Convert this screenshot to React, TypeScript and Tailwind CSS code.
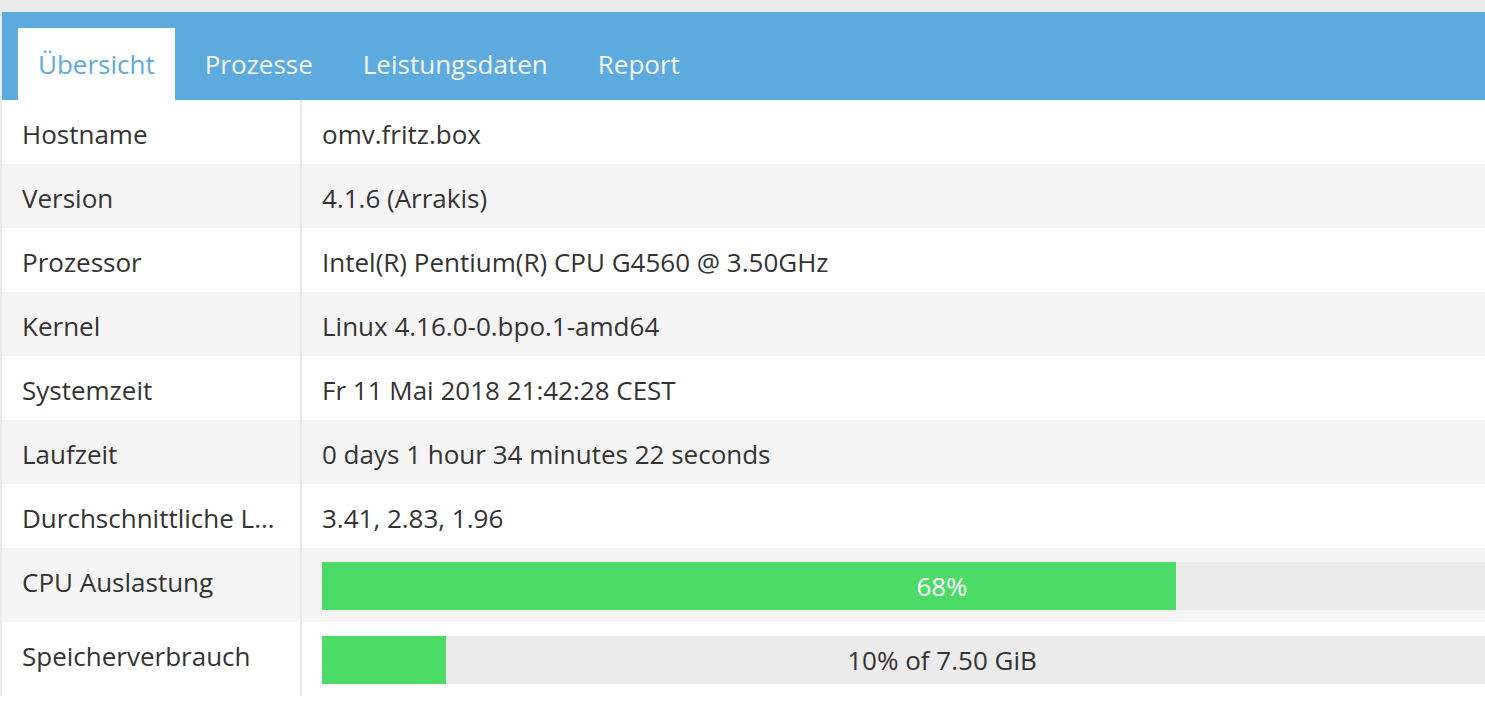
import React from "react"

const tabs = ["Übersicht", "Prozesse", "Leistungsdaten", "Report"]

const rows: { label: string; value: string }[] = [
  { label: "Hostname", value: "omv.fritz.box" },
  { label: "Version", value: "4.1.6 (Arrakis)" },
  { label: "Prozessor", value: "Intel(R) Pentium(R) CPU G4560 @ 3.50GHz" },
  { label: "Kernel", value: "Linux 4.16.0-0.bpo.1-amd64" },
  { label: "Systemzeit", value: "Fr 11 Mai 2018 21:42:28 CEST" },
  { label: "Laufzeit", value: "0 days 1 hour 34 minutes 22 seconds" },
  { label: "Durchschnittliche Last", value: "3.41, 2.83, 1.96" },
]

const bars = [
  { label: "CPU Auslastung", fill: 68.9, text: "68%" },
  { label: "Speicherverbrauch", fill: 10, text: "10% of 7.50 GiB" },
]

function ProgressBar({ fill, text }: { fill: number; text: string }) {
  return (
    <div className="relative h-12 w-[1240px] bg-[#ebebeb]">
      <div className="h-full bg-[#4cdb67]" style={{ width: `${fill}%` }} />
      <div
        className={`absolute inset-0 flex items-center justify-center ${
          fill > 50 ? "text-white" : "text-[#333333]"
        }`}
      >
        {text}
      </div>
    </div>
  )
}

export default function App() {
  return (
    <div className="h-screen w-screen overflow-hidden bg-white font-['Open_Sans',sans-serif] text-[26px] leading-8 text-[#333333]">
      <div className="h-3 bg-[#ebebeb]" />
      <div className="w-[1600px] border-l-2 border-[#ebebeb]">
        {/* Tab bar */}
        <div className="flex h-[88px] items-end gap-2.5 bg-[#5dabde] pl-4">
          {tabs.map((tab, i) => (
            <div
              key={tab}
              className={`flex h-[72px] items-center px-5 ${
                i === 0 ? "bg-white text-[#5dabde]" : "text-[#f2f7fc]"
              }`}
            >
              {tab}
            </div>
          ))}
        </div>

        {/* Info rows */}
        {rows.map((row, i) => (
          <div key={row.label} className={`flex h-16 ${i % 2 === 1 ? "bg-[#f5f5f5]" : "bg-white"}`}>
            <div className="w-[300px] shrink-0 border-r-2 border-[#e8e8e8] px-5 pt-[18px]">
              {row.label.length > 20 ? <div className="truncate">{row.label}</div> : row.label}
            </div>
            <div className="pl-5 pt-[18px] whitespace-nowrap">{row.value}</div>
          </div>
        ))}

        {bars.map((bar, i) => (
          <div key={bar.label} className={`flex h-[74px] ${i % 2 === 0 ? "bg-[#f5f5f5]" : "bg-white"}`}>
            <div className="w-[300px] shrink-0 border-r-2 border-[#e8e8e8] px-5 pt-[18px]">
              {bar.label}
            </div>
            <div className="pl-5 pt-[14px]">
              <ProgressBar fill={bar.fill} text={bar.text} />
            </div>
          </div>
        ))}
      </div>
    </div>
  )
}
